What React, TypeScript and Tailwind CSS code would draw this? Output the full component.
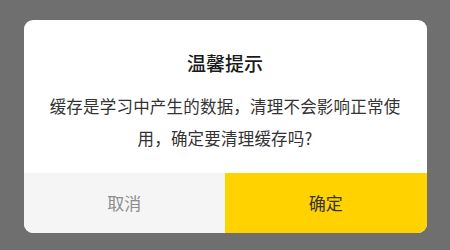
import React from 'react';

const App = (): React.ReactElement => {
    return (
        <div
            className="w-[450px] h-[250px] bg-[#6f6f6f] pt-[20px] flex justify-center"
            style={{ fontFamily: '"Noto Sans CJK SC", "Noto Sans", sans-serif' }}
        >
            <div className="w-[403px] h-[213px] bg-white rounded-[9px] overflow-hidden flex flex-col">
                {/* Title */}
                <h2 className="pt-[30px] text-[19px] leading-[26px] font-medium text-[#1a1a1a] text-center">
                    温馨提示
                </h2>

                {/* Message */}
                <p className="mt-[14px] px-[24px] text-[16.5px] tracking-[0.2px] leading-[32px] text-[#333333] text-center">
                    缓存是学习中产生的数据，清理不会影响正常使用，确定要清理缓存吗?
                </p>

                {/* Actions */}
                <div className="mt-auto flex h-[60px]">
                    <button className="flex-1 bg-[#f5f5f5] text-[#8c8c8c] text-[17px]">取消</button>
                    <button className="flex-1 bg-[#ffd200] text-[#333333] text-[17px]">确定</button>
                </div>
            </div>
        </div>
    );
};

export default App;
